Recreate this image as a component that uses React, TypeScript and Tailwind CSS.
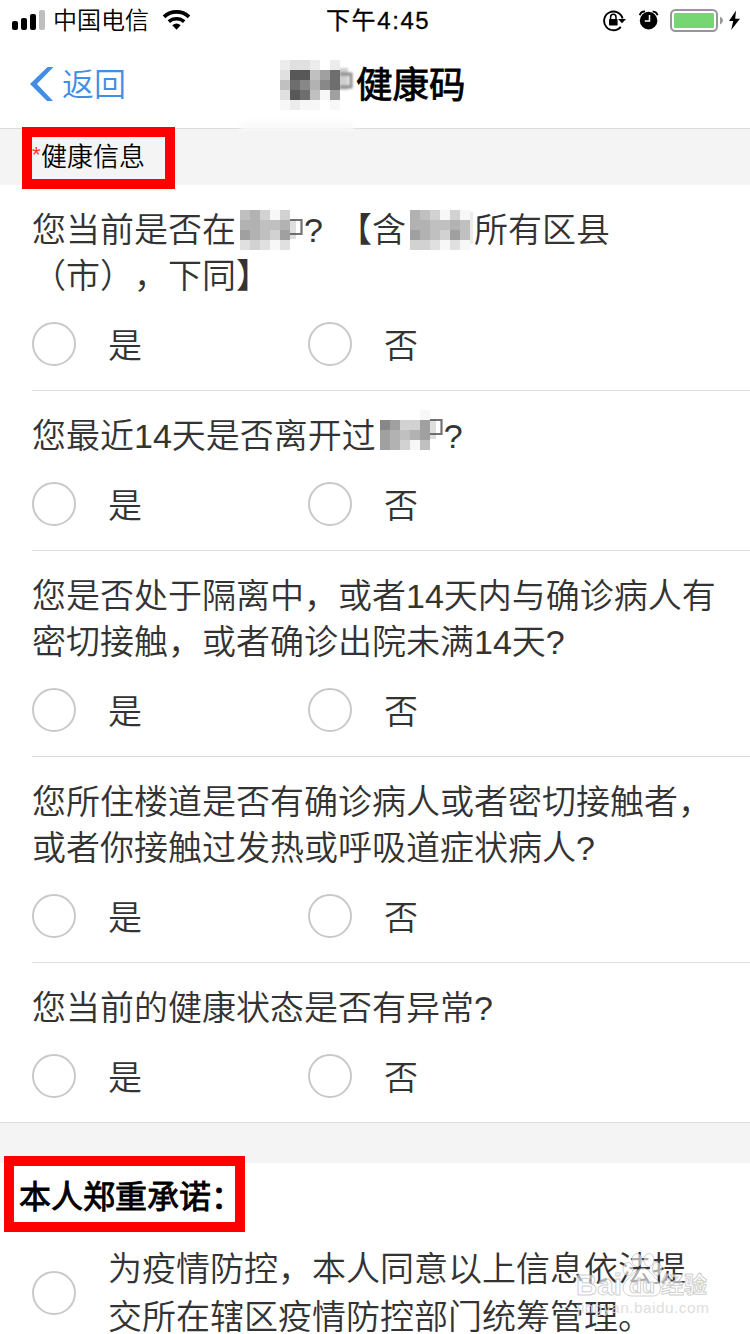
import type { ReactNode } from "react";

const cellSize = 10;

/* Each string is one row of cells; each letter is a grey level, '.' is clear. */
const shades: Record<string, string> = {
  a: "#585858",
  b: "#6e6e6e",
  c: "#888888",
  d: "#a0a0a0",
  e: "#b2b2b2",
  f: "#c0c0c0",
  g: "#d2d2d2",
  h: "#e0e0e0",
  i: "#ececec",
  j: "#f7f7f7",
};

function Mosaic({ rows, remnant, className }: { rows: string[]; remnant?: ReactNode; className: string }) {
  return (
    <svg
      className={`pointer-events-none absolute overflow-visible ${className}`}
      width={rows[0].length * cellSize}
      height={rows.length * cellSize}
      aria-hidden="true"
    >
      {remnant}
      {rows.flatMap((row, y) =>
        row.split("").map((cell, x) =>
          cell === "." ? null : (
            <rect
              key={`${x}-${y}`}
              x={x * cellSize}
              y={y * cellSize}
              width={cellSize}
              height={cellSize}
              fill={shades[cell]}
              shapeRendering="crispEdges"
            />
          ),
        ),
      )}
    </svg>
  );
}

function StatusBar() {
  return (
    <div className="flex h-10 items-center text-black">
      <svg className="ml-3" width="34" height="40" viewBox="0 0 34 40">
        <rect x="0" y="21" width="6" height="9" rx="2" />
        <rect x="9" y="18" width="6" height="12" rx="2" />
        <rect x="18" y="14" width="6" height="16" rx="2" />
        <rect x="27" y="10" width="6" height="20" rx="2" fill="#bfbfbf" />
      </svg>
      <span className="mt-0.5 ml-[7px] w-[97px] text-2xl leading-10 font-[350] whitespace-nowrap">中国电信</span>
      <svg className="ml-3" width="30" height="40" viewBox="0 0 30 40" fill="none" stroke="#000">
        <path d="M2 16.8 A18.5 18.5 0 0 1 27 16.8" strokeWidth="3.8" />
        <path d="M6.8 21.6 A11.6 11.6 0 0 1 22.2 21.6" strokeWidth="3.6" />
        <path d="M10.3 25.3 A6.5 6.5 0 0 1 18.7 25.3 L14.5 29.8 Z" fill="#000" stroke="none" />
      </svg>
      <span className="mt-0.5 ml-[134px] w-[106px] text-2xl leading-10 tracking-[1.6px] whitespace-nowrap [-webkit-text-stroke:0.3px_#000]">下午4:45</span>
      <svg className="ml-[171px]" width="24" height="40" viewBox="0 0 24 40">
        <path d="M17.8 26.8 A9.4 9.4 0 1 1 19.6 18.5" fill="none" stroke="#000" strokeWidth="1.9" />
        <path d="M15 19 H23 L19 23.3 Z" />
        <rect x="6" y="19" width="8.6" height="6.6" rx="0.8" />
        <path d="M7.6 19.5 V17.2 A2.7 2.9 0 0 1 13 17.2 V19.5" fill="none" stroke="#000" strokeWidth="1.5" />
      </svg>
      <svg className="ml-3" width="20" height="40" viewBox="0 0 20 40">
        <circle cx="9.6" cy="20.6" r="8.8" />
        <path d="M0.8 15.2 A5 5 0 0 1 6 11.6 M13.6 11.6 A5 5 0 0 1 18.6 15.2" fill="none" stroke="#000" strokeWidth="1.9" />
        <path d="M10.5 15 V21 H5.8" fill="none" stroke="#fff" strokeWidth="1.5" />
      </svg>
      <svg className="ml-[11px]" width="54" height="40" viewBox="0 0 54 40">
        <rect x="1" y="10" width="46" height="21" rx="4.5" fill="#fff" stroke="#97979b" strokeWidth="2" />
        <rect x="4" y="13" width="40" height="15" rx="1.5" fill="#76d672" />
        <path d="M50 16.5 Q53 18 53 20.5 Q53 23 50 24.5 Z" fill="#97979b" />
      </svg>
      <svg className="ml-1" width="14" height="40" viewBox="0 0 14 40">
        <path d="M8 10.5 L1 21 H5.2 L3.2 30 L12 18.8 H7.2 Z" />
      </svg>
    </div>
  );
}

function NavBar() {
  return (
    <header className="relative flex h-[89px] items-center border-b border-[#dcdcdc] bg-white">
      <a className="flex items-center text-[#428ee5]">
        <svg className="ml-[30px]" width="24" height="34" viewBox="0 0 24 34">
          <path d="M17.5 0 H23.5 L7 17 L23 34 H17 L0 17 Z" fill="#428ee5" />
        </svg>
        <span className="mt-0.5 ml-2 w-[65px] text-[32px] leading-[44px] font-[350]">返回</span>
      </a>
      <h1 className="mt-1 ml-[229px] text-[36.5px] leading-[44px] font-normal text-black [-webkit-text-stroke:0.8px_#000]">健康码</h1>
      <span className="absolute -bottom-0.5 left-[240px] h-2 w-[114px] bg-[#fafafa] blur-[2px]" />
      <Mosaic
        className="top-5 left-[280px]"
        rows={["ihhi.i.", "haafdb.", "fbcecb.", "habfjd.", "jijj.j."]}
        remnant={
          <g className="blur-[0.8px]">
            <rect x="58" y="8" width="10" height="22" fill="#cfcfcf" />
            <path d="M60 14 H71 V27 H60" fill="none" stroke="#8c8c8c" strokeWidth="3" />
          </g>
        }
      />
    </header>
  );
}

function Masked({ rows, shift = "top-[3px]", cut = false }: { rows: string[]; shift?: string; cut?: boolean }) {
  return (
    <span className="relative inline-block h-[46px] w-[68px] align-top">
      <Mosaic
        rows={rows}
        className={`left-1 ${shift}`}
        remnant={
          <g className="blur-[0.5px]">
            <rect x="47" y={cut ? 2 : 9} width={cut ? 16 : 9} height={cut ? 32 : 20} fill={cut ? "#ececec" : "#dedede"} />
            {!cut && <path d="M49 10 H61.5 V24 H49" fill="none" stroke="#505050" strokeOpacity="0.8" strokeWidth="2.2" />}
          </g>
        }
      />
    </span>
  );
}

function Mark() {
  return <span className="inline-block w-[34px]">?</span>;
}

function Radio() {
  return <span className="block size-11 shrink-0 rounded-full border-2 border-[#c9c9c9] bg-white" />;
}

function Question({ lines, last = false }: { lines: ReactNode[]; last?: boolean }) {
  return (
    <section className={last ? "" : "pl-8"}>
      <div className={last ? "border-b border-[#dcdcdc] pt-[22px] pb-6 pl-8" : "border-b border-[#dcdcdc] pt-[22px] pb-6"}>
        <div className="text-[34px] leading-[46px] font-[350] whitespace-nowrap">
          {lines.map((line, i) => (
            <p key={i} className="h-[46px]">{line}</p>
          ))}
        </div>
        <div className="mt-[23px] flex h-11 items-center text-[34px] leading-[46px] font-[350]">
          <label className="flex w-[276px] items-center gap-8">
            <Radio />
            <span className="mt-[3px]">是</span>
          </label>
          <label className="flex items-center gap-8">
            <Radio />
            <span className="mt-[3px]">否</span>
          </label>
        </div>
      </div>
    </section>
  );
}

function Watermark() {
  return (
    <svg className="absolute right-0 bottom-0" width="180" height="90" viewBox="570 1244 180 90" aria-hidden="true">
      <g fill="#fff" fillOpacity="0.6" stroke="#b5b5b5" strokeOpacity="0.65" strokeWidth="1">
        <ellipse cx="628" cy="1269" rx="5" ry="6.5" />
        <ellipse cx="637" cy="1260" rx="5" ry="6.5" />
        <ellipse cx="649" cy="1260" rx="5" ry="6.5" />
        <ellipse cx="657" cy="1269" rx="4.5" ry="6.5" />
        <path d="M643 1268 C635 1270 632 1276 627 1280 C619 1288 624 1297 634 1296 H651 C661 1297 663 1287 657 1280 C652 1276 650 1269 643 1268 Z" />
        <text x="576" y="1295" fontSize="30" fontWeight="700" textLength="46" lengthAdjust="spacingAndGlyphs">Bai</text>
        <text x="629" y="1293" fontSize="21" fontWeight="700" textLength="26" lengthAdjust="spacingAndGlyphs">du</text>
        <text x="661" y="1293" fontSize="23" fontWeight="700" textLength="46" lengthAdjust="spacingAndGlyphs">经验</text>
      </g>
      <text x="577" y="1313" fontSize="15.5" fill="#dadada" fillOpacity="0.9" textLength="132">jingyan.baidu.com</text>
    </svg>
  );
}

export default function App() {
  return (
    <main className="relative h-[1334px] w-[750px] overflow-hidden bg-white font-['Liberation_Sans','Noto_Sans_CJK_SC',sans-serif] text-[#333] [text-spacing-trim:space-all]">
      <StatusBar />
      <NavBar />
      <div className="flex h-14 bg-[#f4f4f4] pl-[22px]">
        <h2 className="relative -mt-0.5 h-[62px] w-[153px] shrink-0 border-[10px] border-[#f00] text-[26px] leading-[41px] font-[350] whitespace-nowrap text-black">
          <span className="inline-block w-[9px] align-top text-[22px] leading-[35px] text-[#f33]">*</span>健康信息
        </h2>
      </div>
      <Question
        lines={[
          <>
            您当前是否在<Masked rows={["fegjg.", "eeffe.", "defgd.", "hghjh."]} />
            <Mark />【含<Masked cut rows={["efgjgj", "eeffef", "defgdf", "gghjhj"]} />所有区县
          </>,
          "（市），下同】",
        ]}
      />
      <Question
        lines={[
          <>
            您最近14天是否离开过<Masked shift="top-[-3px]" rows={["....j.", "cdggd.", "defed.", "degjf."]} />
            <Mark />
          </>,
        ]}
      />
      <Question
        lines={["您是否处于隔离中，或者14天内与确诊病人有", <>密切接触，或者确诊出院未满14天<Mark /></>]}
      />
      <Question
        lines={["您所住楼道是否有确诊病人或者密切接触者，", <>或者你接触过发热或呼吸道症状病人<Mark /></>]}
      />
      <Question last lines={[<>您当前的健康状态是否有异常<Mark /></>]} />
      <div className="h-10 bg-[#f4f4f4]" />
      <div className="px-1">
        <h2 className="relative -mt-[7px] h-[76px] w-[241px] border-[10px] border-[#f00] pl-[5px] text-[32px] leading-[62px] font-normal whitespace-nowrap text-black [-webkit-text-stroke:0.9px_#000]">
          本人郑重承诺：
        </h2>
      </div>
      <label className="mt-[13px] flex items-center gap-8 pl-8">
        <Radio />
        <p className="text-[34px] leading-[48px] font-[350] whitespace-nowrap">
          为疫情防控，本人同意以上信息依法提
          <br />
          交所在辖区疫情防控部门统筹管理。
        </p>
      </label>
      <Watermark />
    </main>
  );
}
